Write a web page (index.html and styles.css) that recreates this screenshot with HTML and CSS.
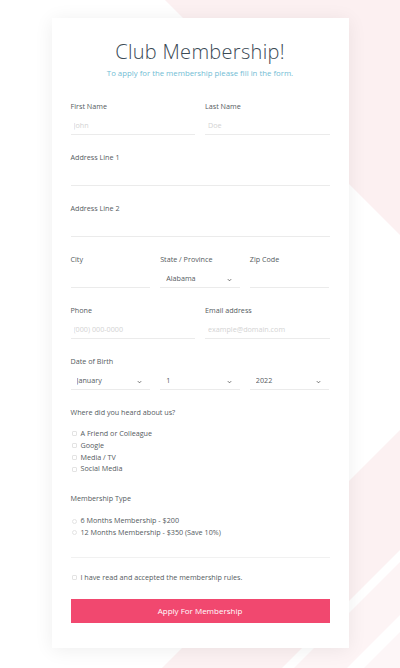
FILE: index.html
```html
<!DOCTYPE html>
<html lang="en">
<head>
<meta charset="UTF-8">
<meta name="viewport" content="width=device-width, initial-scale=1.0">
<title>Club Membership</title>
<link rel="stylesheet" href="styles.css">
</head>
<body>
<div class="page">
  <!-- decorative diagonal bands behind the card -->
  <svg class="backdrop" viewBox="0 0 400 668" preserveAspectRatio="none" aria-hidden="true">
    <polygon points="165,0 400,0 400,235" fill="#fcf0f1"/>
    <polygon points="400,430 400,550 282,668 162,668" fill="#fcf1f2"/>
    <polygon points="400,562 400,615 347,668 294,668" fill="#fdf4f5"/>
    <polygon points="400,632 400,668 364,668" fill="#fdf6f7"/>
  </svg>

  <form class="card">
    <h1>Club Membership!</h1>
    <p class="lead">To apply for the membership please fill in the form.</p>

    <div class="row cols-2">
      <div class="field">
        <label for="firstName">First Name</label>
        <input type="text" id="firstName" placeholder="John">
      </div>
      <div class="field">
        <label for="lastName">Last Name</label>
        <input type="text" id="lastName" placeholder="Doe">
      </div>
    </div>

    <div class="row">
      <div class="field">
        <label for="address1">Address Line 1</label>
        <input type="text" id="address1">
      </div>
    </div>

    <div class="row">
      <div class="field">
        <label for="address2">Address Line 2</label>
        <input type="text" id="address2">
      </div>
    </div>

    <div class="row cols-3">
      <div class="field">
        <label for="city">City</label>
        <input type="text" id="city">
      </div>
      <div class="field">
        <label for="state">State / Province</label>
        <div class="select">
          <select id="state">
            <option>Alabama</option>
            <option>Alaska</option>
            <option>Arizona</option>
          </select>
          <svg class="chevron" viewBox="0 0 6 4"><path d="M1 1l2 2 2-2" fill="none" stroke="#555" stroke-width="1"/></svg>
        </div>
      </div>
      <div class="field">
        <label for="zip">Zip Code</label>
        <input type="text" id="zip">
      </div>
    </div>

    <div class="row cols-2">
      <div class="field">
        <label for="phone">Phone</label>
        <input type="tel" id="phone" placeholder="(000) 000-0000">
      </div>
      <div class="field">
        <label for="email">Email address</label>
        <input type="email" id="email" placeholder="example@domain.com">
      </div>
    </div>

    <div class="row">
      <div class="field">
        <label for="month">Date of Birth</label>
        <div class="dob">
          <div class="select">
            <select id="month">
              <option>January</option>
              <option>February</option>
              <option>March</option>
            </select>
            <svg class="chevron" viewBox="0 0 6 4"><path d="M1 1l2 2 2-2" fill="none" stroke="#555" stroke-width="1"/></svg>
          </div>
          <div class="select">
            <select id="day">
              <option>1</option>
              <option>2</option>
              <option>3</option>
            </select>
            <svg class="chevron" viewBox="0 0 6 4"><path d="M1 1l2 2 2-2" fill="none" stroke="#555" stroke-width="1"/></svg>
          </div>
          <div class="select">
            <select id="year">
              <option>2022</option>
              <option>2021</option>
              <option>2020</option>
            </select>
            <svg class="chevron" viewBox="0 0 6 4"><path d="M1 1l2 2 2-2" fill="none" stroke="#555" stroke-width="1"/></svg>
          </div>
        </div>
      </div>
    </div>

    <div class="group heard">
      <p class="group-title">Where did you heard about us?</p>
      <label class="option"><input type="checkbox"> A Friend or Colleague</label>
      <label class="option"><input type="checkbox"> Google</label>
      <label class="option"><input type="checkbox"> Media / TV</label>
      <label class="option"><input type="checkbox"> Social Media</label>
    </div>

    <div class="group plan">
      <p class="group-title">Membership Type</p>
      <label class="option"><input type="radio" name="plan"> 6 Months Membership - $200</label>
      <label class="option"><input type="radio" name="plan"> 12 Months Membership - $350 (Save 10%)</label>
    </div>

    <hr>

    <label class="option rules"><input type="checkbox"> I have read and accepted the membership rules.</label>

    <button type="submit">Apply For Membership</button>
  </form>
</div>
</body>
</html>
```

FILE: styles.css
```css
body {
  margin: 0;
  font-family: "Open Sans", "Liberation Sans", sans-serif;
  background-color: #fff;
  color: #555b61;
}
.page {
  position: relative;
  min-height: 668px;
  padding-top: 18px;
  box-sizing: border-box;
  overflow: hidden;
}
.backdrop {
  position: absolute;
  top: 0;
  left: 0;
  width: 100%;
  height: 668px;
  z-index: 0;
}
.card {
  position: relative;
  z-index: 1;
  width: 297px;
  margin: 0 auto;
  padding: 21px 19px 25px;
  box-sizing: border-box;
  background-color: #fff;
  box-shadow: 0 2px 18px rgba(0, 0, 0, 0.07);
}
h1 {
  margin: 0;
  text-align: center;
  font-size: 20px;
  line-height: 26px;
  font-weight: 300;
  color: #3b4a55;
  letter-spacing: 0.3px;
}
.lead {
  margin: 3px 0 0;
  text-align: center;
  font-size: 7.8px;
  line-height: 10px;
  color: #72bcd4;
}
.row {
  margin-top: 17px;
}
.lead + .row {
  margin-top: 23px;
}
.cols-2 {
  display: grid;
  grid-template-columns: 1fr 1fr;
  column-gap: 10px;
}
.cols-3,
.dob {
  display: grid;
  grid-template-columns: 1fr 1fr 1fr;
  column-gap: 10px;
}
.field label {
  display: block;
  font-size: 7.2px;
  line-height: 10px;
  color: #555b61;
}
.field input,
.select select {
  display: block;
  width: 100%;
  height: 24px;
  margin: 0;
  padding: 5px 3px 0;
  box-sizing: border-box;
  border: none;
  border-bottom: 1px solid #ebebeb;
  border-radius: 0;
  background: transparent;
  font-family: inherit;
  font-size: 7.2px;
  color: #555b61;
  outline: none;
}
.field input::placeholder {
  color: #d3d3d3;
}
.select {
  position: relative;
}
.select select {
  -webkit-appearance: none;
  appearance: none;
  padding-left: 6px;
}
.chevron {
  position: absolute;
  right: 8px;
  top: 14px;
  width: 5px;
  height: 4px;
  pointer-events: none;
}
.group {
  margin-top: 17px;
}
.group-title {
  margin: 0 0 11px;
  font-size: 7.2px;
  line-height: 10px;
}
.plan {
  margin-top: 18px;
}
.plan .group-title {
  margin-bottom: 12px;
}
.option {
  display: flex;
  align-items: center;
  font-size: 7.2px;
  line-height: 11.8px;
  color: #555b61;
}
.option input {
  -webkit-appearance: none;
  appearance: none;
  width: 5px;
  height: 5px;
  margin: 0 4px 0 1px;
  border: 1px solid #e3e3e3;
  border-radius: 1px;
  background: #fff;
}
.option input[type="radio"] {
  border-radius: 50%;
}
hr {
  margin: 18px 0 0;
  border: none;
  border-top: 1px solid #f1f1f1;
}
.rules {
  margin-top: 14px;
}
button {
  display: block;
  width: 100%;
  height: 24px;
  margin-top: 15px;
  padding: 0;
  border: none;
  border-radius: 0;
  background-color: #f1486f;
  color: #fff;
  font-family: inherit;
  font-size: 8px;
  cursor: pointer;
}
```
